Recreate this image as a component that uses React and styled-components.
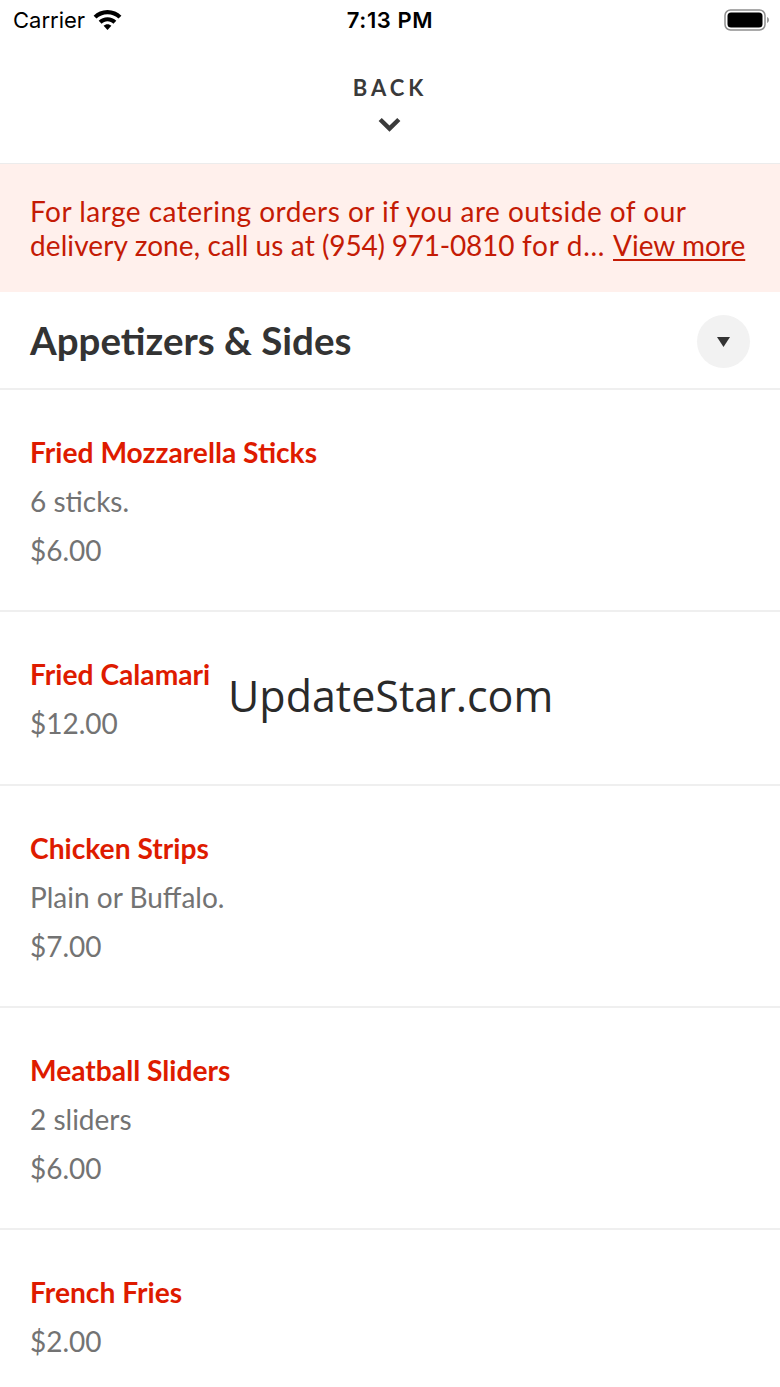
import styled, { createGlobalStyle } from "styled-components";

const GlobalStyle = createGlobalStyle`
  html, body {
    margin: 0;
    padding: 0;
    background: #fff;
  }
  * {
    box-sizing: border-box;
  }
`

const Page = styled.div`
  position: relative;
  width: 780px;
  height: 1387px;
  overflow: hidden;
  background: #fff;
  font-family: "Lato", "Liberation Sans", sans-serif;
`

const StatusBar = styled.div`
  height: 40px;
  padding: 0 13px;
  display: grid;
  grid-template-columns: 1fr auto 1fr;
  align-items: center;
  font-family: "Inter", "Liberation Sans", sans-serif;
  color: #000;
`

const Carrier = styled.div`
  display: flex;
  align-items: center;
  gap: 8px;
  font-size: 22px;
`

const Clock = styled.div`
  font-size: 22px;
  font-weight: 600;
  letter-spacing: 0.6px;
`

const BatteryWrap = styled.div`
  display: flex;
  justify-content: flex-end;
  margin-right: -3px;
`

const BackBar = styled.div`
  height: 124px;
  padding-top: 35px;
  display: flex;
  flex-direction: column;
  align-items: center;
  border-bottom: 1px solid #ececec;
`

const BackLabel = styled.div`
  font-size: 22px;
  line-height: 26px;
  font-weight: 700;
  letter-spacing: 4px;
  color: #3a3a3a;
`

const Chevron = styled.svg`
  margin-top: 16px;
  margin-right: 1px;
`

const Notice = styled.div`
  height: 128px;
  padding: 30px 30px 0;
  background: #fff0ec;
  color: #c41b05;
  font-size: 28px;
  line-height: 34px;
  white-space: pre;
`

const Tracked = styled.span`
  letter-spacing: ${(props) => props.$tracking}px;
`

const NoticeLink = styled.span`
  text-decoration: underline;
  text-underline-offset: 3px;
`

const SectionHeader = styled.div`
  height: 98px;
  padding: 0 30px;
  display: flex;
  align-items: center;
  justify-content: space-between;
  border-bottom: 2px solid #efefef;
`

const SectionTitle = styled.h2`
  margin: 0;
  font-size: 38.5px;
  font-weight: 700;
  color: #333;
`

const Toggle = styled.div`
  width: 53px;
  height: 53px;
  margin-top: 3px;
  border-radius: 50%;
  background: #f2f2f2;
  display: flex;
  align-items: center;
  justify-content: center;
`

const Row = styled.div`
  padding: 38px 30px 35.33px;
  border-bottom: 2px solid #efefef;

  &:last-child {
    border-bottom: 0;
  }
`

const ItemName = styled.div`
  font-size: 28.2px;
  line-height: 49px;
  font-weight: 700;
  color: #de1b00;
`

const ItemText = styled.div`
  font-size: 28px;
  line-height: 49px;
  color: #737373;
`

const Watermark = styled.div`
  position: absolute;
  top: 667px;
  left: 228px;
  font-family: "Open Sans", "Noto Sans", sans-serif;
  font-size: 43px;
  line-height: 58px;
  color: #2a2a2a;
`

const items = [
  { name: "Fried Mozzarella Sticks", desc: "6 sticks.", price: "$6.00" },
  { name: "Fried Calamari", price: "$12.00" },
  { name: "Chicken Strips", desc: "Plain or Buffalo.", price: "$7.00" },
  { name: "Meatball Sliders", desc: "2 sliders", price: "$6.00" },
  { name: "French Fries", price: "$2.00" },
]

function WifiIcon() {
  return (
    <svg width="29" height="21" viewBox="0 0 29 21">
      <path fill="#000" d="M14.5 0C9 0 4.2 2.2 .6 5.7l2.9 2.9C6.3 5.9 10.2 4.2 14.5 4.2s8.2 1.7 11 4.4l2.9-2.9C24.8 2.2 20 0 14.5 0z" />
      <path fill="#000" d="M14.5 7.2c-3.4 0-6.5 1.4-8.8 3.6l2.9 2.9c1.5-1.5 3.6-2.4 5.9-2.4s4.4.9 5.9 2.4l2.9-2.9c-2.3-2.2-5.4-3.6-8.8-3.6z" />
      <path fill="#000" d="M14.5 14.3c-1.5 0-2.9.6-3.9 1.5l3.900 4.200 3.900-4.200c-1-.9-2.400-1.500-3.900-1.500z" />
    </svg>
  )
}

function BatteryIcon() {
  return (
    <svg width="46" height="22" viewBox="0 0 46 22">
      <rect x="1" y="1" width="40" height="20" rx="5.5" fill="none" stroke="#8e8e8e" strokeWidth="1.5" />
      <rect x="3.5" y="3.5" width="35" height="15" rx="3.5" fill="#000" />
      <path d="M43 8v6c1.2-.4 2-1.6 2-3s-.8-2.6-2-3z" fill="#9a9a9a" />
    </svg>
  )
}

function App() {
  return (
    <Page>
      <GlobalStyle />
      <StatusBar>
        <Carrier>
          Carrier
          <WifiIcon />
        </Carrier>
        <Clock>7:13 PM</Clock>
        <BatteryWrap>
          <BatteryIcon />
        </BatteryWrap>
      </StatusBar>
      <BackBar>
        <BackLabel>BACK</BackLabel>
        <Chevron width="23" height="15" viewBox="0 0 23 15">
          <path d="M2.2 2.5 11.5 11.5 20.8 2.5" fill="none" stroke="#3a3a3a" strokeWidth="4.5" />
        </Chevron>
      </BackBar>
      <Notice>
        <Tracked $tracking={0.48}>For large catering orders or if you are outside of our</Tracked>
        {"\n"}
        <Tracked $tracking={0.1}>delivery zone, call us at </Tracked>
        <Tracked $tracking={-0.2}>(954) 971-0810</Tracked>
        <Tracked $tracking={0.7}> for d... </Tracked>
        <NoticeLink>View more</NoticeLink>
      </Notice>
      <SectionHeader>
        <SectionTitle>Appetizers &amp; Sides</SectionTitle>
        <Toggle>
          <svg width="13" height="10" viewBox="0 0 13 10">
            <path d="M0 0h13L6.5 10z" fill="#333" />
          </svg>
        </Toggle>
      </SectionHeader>
      {items.map((item) => (
        <Row key={item.name}>
          <ItemName>{item.name}</ItemName>
          {item.desc && <ItemText>{item.desc}</ItemText>}
          <ItemText>{item.price}</ItemText>
        </Row>
      ))}
      <Watermark>UpdateStar.com</Watermark>
    </Page>
  )
}

export default App
